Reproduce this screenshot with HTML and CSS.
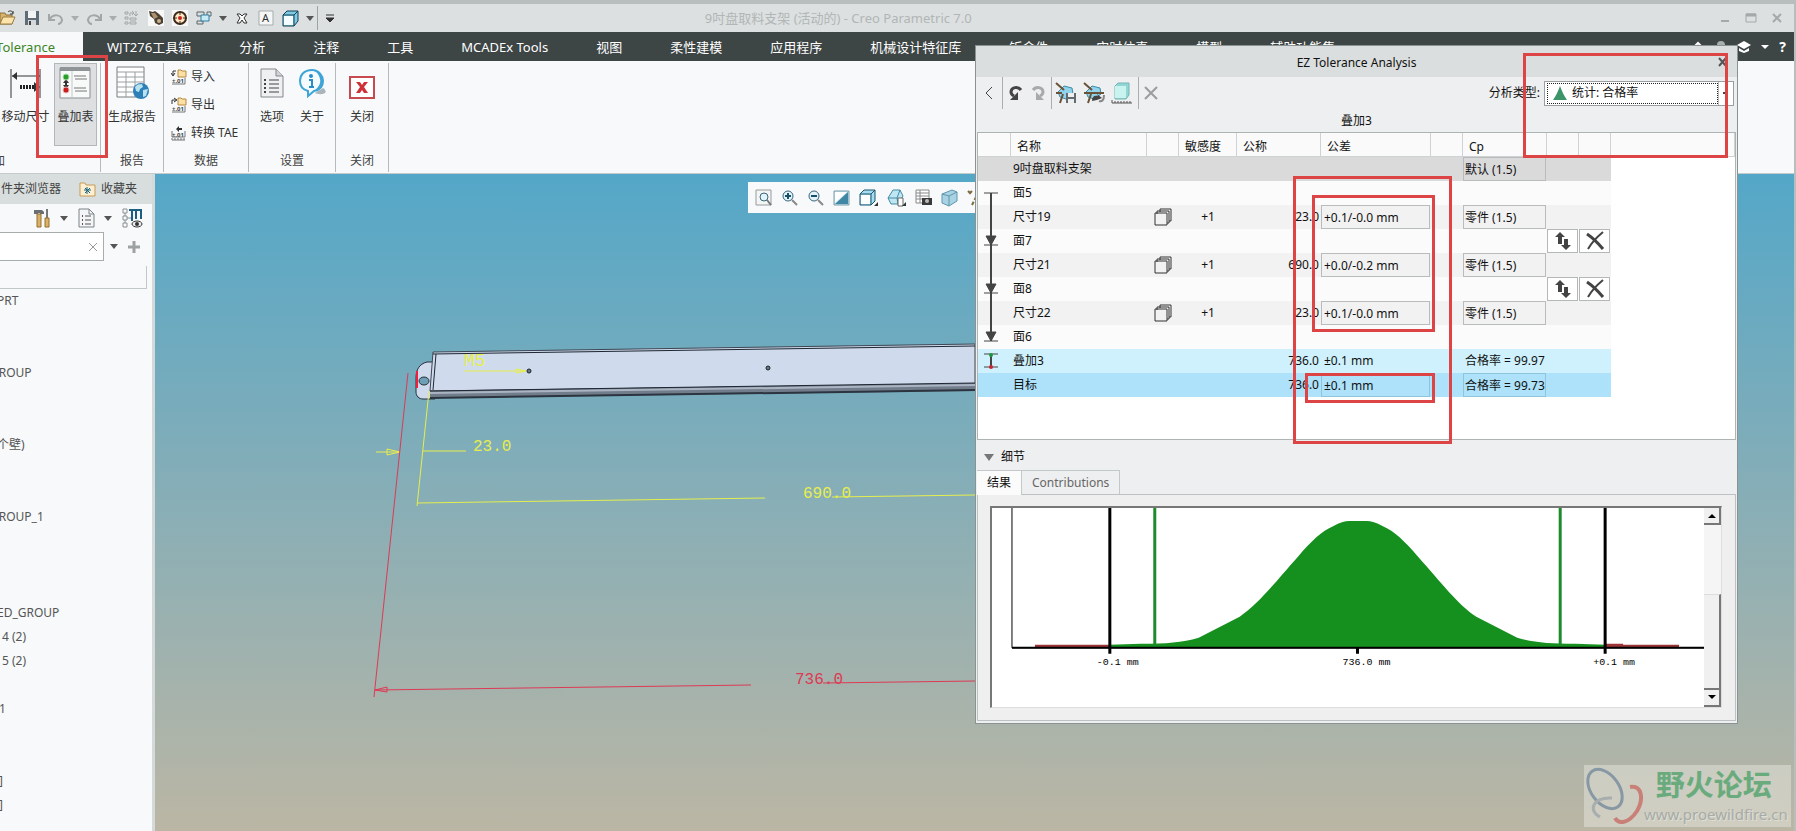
FILE: index.html
```html
<!DOCTYPE html>
<html lang="zh">

<head>
    <meta charset="UTF-8">
    <meta name="viewport" content="width=device-width, initial-scale=1.0">
    <title>9吋盘取料支架 (活动的) - Creo Parametric 7.0</title>
    <link rel="stylesheet" href="styles.css">
</head>

<body>
    <div class="app">
        <!-- 标题栏 -->
        <header class="titlebar">
            <div class="quick">
                <button class="qbtn" aria-label="打开"><svg width="16" height="16"><path d="M0 3h5l1 2h6v9H0z" fill="#d9b36a" stroke="#8a6f3c"/><path d="M0 14l3-7h12l-3 7z" fill="#fbe3ab" stroke="#9a7b41"/><path d="M8 2c2-2 4-1 5 1m0-2v3h-3" fill="none" stroke="#333"/></svg></button>
                <button class="qbtn" aria-label="保存"><svg width="16" height="16"><path d="M1 1h14v14H1z" fill="#5f6b75"/><path d="M4 1h8v7H4z" fill="#f1f3f4"/><path d="M4 10h8v5H4z" fill="#d5d9dc"/><path d="M5 11h2v4H5z" fill="#444"/></svg></button>
                <button class="qbtn" aria-label="撤销"><svg width="16" height="16"><path d="M1 4v6h6M2 9c3-5 11-5 12 1 0 2-2 4-4 4" fill="none" stroke="#a2a6a6" stroke-width="2"/></svg></button>
                <button class="caret pale" aria-label="撤销列表"></button>
                <button class="qbtn" aria-label="重做"><svg width="16" height="16"><path d="M15 4v6H9m5-1C11 4 3 4 2 10c0 2 2 4 4 4" fill="none" stroke="#a2a6a6" stroke-width="2"/></svg></button>
                <button class="caret pale" aria-label="重做列表"></button>
                <button class="qbtn" aria-label="重新生成"><svg width="16" height="16"><path d="M1 2h3v2H1zm0 5h3v2H1zm0 5h3v2H1zM6 8h6v2H6zm0 4h6v2H6zM6 6V3h3m-1-2l2 2-2 2m4-4v5m-2-2l2 2 2-2" fill="none" stroke="#a3a7a7"/></svg></button>
                <button class="qbtn tile" aria-label="外观"><svg width="16" height="16"><path d="M1 1l4 1 2-1 4 3 4 4v5l-4 2-4-2-1-4-4-3z" fill="#4d4134"/><path d="M3 3l4 0 3 4-4 2z" fill="#a9926e"/><circle cx="11" cy="11" r="2" fill="#c5b391"/></svg></button>
                <button class="qbtn tile" aria-label="定位"><svg width="16" height="16"><circle cx="8" cy="8" r="6" fill="#ffe9c4" stroke="#3d2a1a" stroke-width="2"/><path d="M8 1v14M1 8h14" stroke="#3d2a1a" stroke-dasharray="4 6"/><circle cx="8" cy="8" r="2" fill="#c22"/></svg></button>
                <button class="qbtn" aria-label="窗口"><svg width="16" height="16"><path d="M1 2h7v4H1zM1 11h6v3H1zM11 2h4v4h-4z" fill="none" stroke="#5d666b"/><path d="M5 5h8v6H5z" fill="#c6eaf6" stroke="#2f7da0"/></svg></button>
                <button class="caret" aria-label="窗口列表"></button>
                <button class="qbtn" aria-label="关闭窗口"><svg width="16" height="16"><path d="M3 4h3l2 2 2-2h3l-3 4 3 5h-3l-2-3-2 3H3l3-5z" fill="#fff" stroke="#333"/></svg></button>
                <button class="qbtn" aria-label="注释"><svg width="16" height="16"><path d="M1 1h14v14H1z" fill="#f5f7f7" stroke="#a6abab"/><text x="4" y="12" class="icon-text">A</text></svg></button>
                <button class="qbtn" aria-label="显示样式"><svg width="17" height="17"><path d="M1 5l4-4h11v10l-4 5H1z" fill="#7fcbe6" stroke="#123f52"/><path d="M2 6h9v9H2z" fill="#f4fcff"/><path d="M1 5h11v11M12 5l4-4" fill="none" stroke="#123f52"/></svg></button>
                <button class="caret" aria-label="显示样式列表"></button>
                <span class="qsep"></span>
                <button class="qbtn" aria-label="自定义"><svg width="16" height="16"><path d="M4 5h8M4 8h8l-4 4z" fill="#333" stroke="#333"/></svg></button>
            </div>
            <h1 class="app-title">9吋盘取料支架 (活动的) - Creo Parametric 7.0</h1>
            <div class="win-ctl">
                <button aria-label="最小化"><svg width="12" height="12"><path d="M2 9h8" stroke="#a5a9a9" stroke-width="2"/></svg></button>
                <button aria-label="最大化"><svg width="12" height="12"><path d="M1 2h10v8H1z" fill="none" stroke="#a5a9a9"/><path d="M1 3h10" stroke="#a5a9a9" stroke-width="3"/></svg></button>
                <button aria-label="退出"><svg width="12" height="12"><path d="M2 2l8 8m0-8l-8 8" stroke="#a5a9a9" stroke-width="2"/></svg></button>
            </div>
        </header>

        <nav class="tabs">
            <a href="#" class="tab active">Tolerance</a>
            <a href="#" class="tab">WJT276工具箱</a>
            <a href="#" class="tab">分析</a>
            <a href="#" class="tab">注释</a>
            <a href="#" class="tab">工具</a>
            <a href="#" class="tab">MCADEx Tools</a>
            <a href="#" class="tab">视图</a>
            <a href="#" class="tab">柔性建模</a>
            <a href="#" class="tab">应用程序</a>
            <a href="#" class="tab">机械设计特征库</a>
            <a href="#" class="tab">钣金件</a>
            <a href="#" class="tab">实时仿真</a>
            <a href="#" class="tab">模型</a>
            <a href="#" class="tab">辅助功能集</a>
            <div class="tab-tools">
                <button aria-label="折叠功能区"><svg width="14" height="14"><path d="M2 8l5-5 5 5" fill="none" stroke="#fff" stroke-width="2"/></svg></button>
                <button aria-label="通知"><svg width="14" height="14"><circle cx="7" cy="5" r="4" fill="#a9afaf"/></svg></button>
                <button aria-label="学习"><svg width="14" height="14"><path d="M0 5l7-4 7 4-7 4z" fill="#fff"/><path d="M2 8v3l5 2 5-2V8l-5 3z" fill="#fff"/></svg></button>
                <button aria-label="学习列表"><svg width="10" height="14"><path d="M1 5h8l-4 4z" fill="#fff"/></svg></button>
                <button class="help" aria-label="帮助">?</button>
            </div>
        </nav>

        <!-- 功能区 -->
        <section class="ribbon">
            <div class="group g-stack">
                <div class="group-body">
                    <button class="big"><svg width="32" height="34"><path d="M2 3v29M31 3v29M3 10h28" stroke="#333" fill="none"/><path d="M3 10l5-4v8z" fill="#333"/><path d="M11 21h16" stroke="#222" stroke-width="4" stroke-dasharray="2 1"/><path d="M25 16l6 5-6 5z" fill="#333"/></svg><span>移动尺寸</span></button>
                    <button class="big pressed"><svg width="32" height="34"><path d="M1 2h30v30H1z" fill="#f8f9f9" stroke="#8a8f91"/><path d="M1 1h30v4H1z" fill="#8f9496"/><path d="M13 5v27" stroke="#c4c8c9"/><path d="M7 12v12" stroke="#333" stroke-width="2"/><path d="M4 17l3-4 3 4zm0 2l3 4 3-4z" fill="#333"/><circle cx="7" cy="11" r="3" fill="#2aa02a" stroke="#a7dba7"/><circle cx="7" cy="24" r="3" fill="#c91e1e" stroke="#eab0b0"/><path d="M15 10h12M16 13h12M15 22h12M16 25h12" stroke="#777"/></svg><span>叠加表</span><i class="mark mark-ribbon"></i></button>
                </div>
                <div class="group-name clipped">加</div>
            </div>
            <div class="group g-report">
                <div class="group-body">
                    <button class="big"><svg width="34" height="34"><path d="M2 1h27v30H2z" fill="#fff" stroke="#777d80"/><path d="M2 6h27M2 11h27M2 16h27M2 21h27M2 26h27M11 6v25M20 6v25" stroke="#9a9fa2"/><circle cx="26" cy="25" r="8" fill="#2d7fb8"/><path d="M20 21c3-4 6-2 7-3l1 3-3 2-1 3-3-1zm8 3l5-1-2 7-3 1z" fill="#b9e2ef"/></svg><span>生成报告</span></button>
                </div>
                <div class="group-name">报告</div>
            </div>
            <div class="group g-data">
                <div class="group-body rows">
                    <button class="small"><svg width="16" height="16"><path d="M7 1h3l1 1h4v6H7z" fill="#fbe0a6" stroke="#b58a3f"/><path d="M5 2H2v4m-2-2l2 3 2-3" fill="none" stroke="#333"/><path d="M1 15h13V9" fill="none" stroke="#777"/><text x="1" y="14" class="tiny-text">±.01</text></svg><span>导入</span></button>
                    <button class="small"><svg width="16" height="16"><path d="M7 1h3l1 1h4v6H7z" fill="#fbe0a6" stroke="#b58a3f"/><path d="M1 7V3h4M3 1l3 2-3 2" fill="none" stroke="#333"/><path d="M1 15h13V9" fill="none" stroke="#777"/><text x="1" y="14" class="tiny-text">±.01</text></svg><span>导出</span></button>
                    <button class="small"><svg width="16" height="16"><path d="M5 4l3-3v2h3v2H8v2z" fill="#333"/><text x="1" y="12" class="tiny-text">±.01</text><path d="M1 6v6h13V6M1 13v2M4 13v2M7 13v2M10 13v2M13 13v2M1 15h13" fill="none" stroke="#777"/></svg><span>转换 TAE</span></button>
                </div>
                <div class="group-name">数据</div>
            </div>
            <div class="group g-set">
                <div class="group-body">
                    <button class="big mid"><svg width="26" height="34"><path d="M2 3h15l7 7v21H2z" fill="#eef0f1" stroke="#84898c"/><path d="M17 3v7h7" fill="#cfd3d5" stroke="#84898c"/><path d="M10 14h10M10 18h10M10 22h10M10 26h10" stroke="#444"/><path d="M5 14h2M5 18h2M5 22h2M5 26h2" stroke="#444" stroke-width="2"/></svg><span>选项</span></button>
                    <button class="big mid"><svg width="28" height="34"><path d="M25 22c3 2 3 4 2 5-3 2-8 1-10 0" fill="#aab4b9"/><path d="M14 4C6 4 2 9 2 15s4 9 8 10v5l6-5c6-1 9-5 9-10S21 4 14 4z" fill="#f6fbfe" stroke="#3ea5d6" stroke-width="2"/><path d="M14 4c7 0 11 5 11 11s-4 9-9 10c5-4 7-8 6-12-1-5-4-8-8-9z" fill="#3ea5d6"/><circle cx="13" cy="10" r="2" fill="#2a8ec4"/><path d="M11 14h3v7m-3 0h5" stroke="#2a8ec4" stroke-width="2" fill="none"/></svg><span>关于</span></button>
                </div>
                <div class="group-name">设置</div>
            </div>
            <div class="group g-close">
                <div class="group-body">
                    <button class="big mid"><svg width="28" height="34"><path d="M2 11h24v21H2z" fill="#fff" stroke="#c74a50" stroke-width="2"/><path d="M8 16h4l2 3 2-3h4l-4 5 4 6h-4l-2-3-2 3H8l4-6z" fill="#cf3139"/></svg><span>关闭</span></button>
                </div>
                <div class="group-name">关闭</div>
            </div>
        </section>

        <main class="work">
            <!-- 模型树 -->
            <aside class="side">
                <div class="side-tabs">
                    <button class="side-tab cut">件夹浏览器</button>
                    <button class="side-tab"><svg width="17" height="16"><path d="M1 2h5l1 2h9v11H1z" fill="#fdf0d2" stroke="#c79a55"/><path d="M8 6v7M5 9h7M6 7l5 5m0-5l-5 5" stroke="#17657f"/></svg>收藏夹</button>
                </div>
                <div class="side-tools">
                    <button aria-label="设置"><svg width="18" height="20"><path d="M1 2h8l2 2v2H7V5H5v1H1z" fill="#6b6f74"/><path d="M4 6h4v13H4z" fill="#dbb067" stroke="#94702f"/><path d="M14 1v9" stroke="#777" stroke-width="2"/><path d="M12 10h4v9h-4z" fill="#dbb067" stroke="#94702f"/></svg></button>
                    <button class="caret" aria-label="设置列表"></button>
                    <button aria-label="显示"><svg width="17" height="20"><path d="M1 1h10l5 5v13H1z" fill="#f3f5f6" stroke="#7d8386"/><path d="M11 1v5h5" fill="none" stroke="#7d8386"/><path d="M7 8h6M7 12h6M7 16h6" stroke="#555"/><path d="M4 8h1M4 12h1M4 16h1" stroke="#555" stroke-width="2"/></svg></button>
                    <button class="caret" aria-label="显示列表"></button>
                    <button aria-label="树列"><svg width="21" height="20"><path d="M1 1h4v4H1zM1 8h4v4H1zM1 15h4v4H1zM5 10h5M3 5v3M3 12v3" fill="none" stroke="#8b9092"/><path d="M7 2h3v11M11 2h3v9M15 2h4v9" fill="none" stroke="#1d5f80" stroke-width="2"/><ellipse cx="15" cy="16" rx="5" ry="3" fill="#e9edef" stroke="#333"/><circle cx="15" cy="16" r="2" fill="#333"/></svg></button>
                </div>
                <div class="side-search">
                    <div class="search-box">
                        <input type="text" aria-label="搜索模型树">
                        <button class="clear" aria-label="清除"><svg width="10" height="10"><path d="M1 1l8 8m0-8L1 9" stroke="#999"/></svg></button>
                    </div>
                    <button class="caret" aria-label="搜索列表"></button>
                    <button aria-label="添加"><svg width="12" height="12"><path d="M6 0v12M0 6h12" stroke="#9da1a2" stroke-width="3"/></svg></button>
                </div>
                <div class="filter-row"></div>
                <ul class="tree">
                    <li class="in">PRT</li>
                    <li></li>
                    <li></li>
                    <li>GROUP</li>
                    <li></li>
                    <li></li>
                    <li class="in">个壁)</li>
                    <li></li>
                    <li></li>
                    <li>GROUP_1</li>
                    <li></li>
                    <li></li>
                    <li></li>
                    <li class="in">ED_GROUP</li>
                    <li class="leaf">4 (2)</li>
                    <li class="leaf">5 (2)</li>
                    <li></li>
                    <li class="edge">1</li>
                    <li></li>
                    <li></li>
                    <li class="edge">]</li>
                    <li class="edge">]</li>
                </ul>
            </aside>

            <!-- 图形区 -->
            <section class="view">
                <svg class="model" width="820" height="640" viewBox="155 174 820 640">
                    <path d="M433 362h-6c-8 2-11 8-11 16v14c0 4 3 7 7 7h12z" fill="#cfdaec" stroke="#26303c"/>
                    <path d="M417 371v17" stroke="#f0203c" stroke-width="2"/>
                    <ellipse cx="424" cy="381" rx="5" ry="4" fill="#6f9fb4" stroke="#26303c"/>
                    <path d="M433 352L975 344V384L430 391z" fill="#cfdaec" stroke="#3c4653"/>
                    <path d="M433 354L975 346" stroke="#1e2732"/>
                    <path d="M436 354L433 390" stroke="#1e2732"/>
                    <path d="M430 391L975 383V391L430 398z" fill="#727d8c"/>
                    <path d="M430 393L975 385" stroke="#aab4c2" stroke-width="2"/>
                    <path d="M430 398L975 390" stroke="#2b343f" stroke-width="2"/>
                    <path d="M430 391L975 383" stroke="#1e2732"/>
                    <circle cx="529" cy="371" r="2" fill="#5d7d8c" stroke="#222"/>
                    <circle cx="768" cy="368" r="2" fill="#5d7d8c" stroke="#222"/>
                    <g class="dim-yellow">
                        <path d="M464 371h62M516 369l10 2-10 2zM429 391L417 506M417 503L765 498M423 451h43M376 452h24M387 449l13 3-13 3zM832 497L975 495"/>
                        <text x="464" y="366" class="note">M5</text>
                        <text x="473" y="451">23.0</text>
                        <text x="803" y="498">690.0</text>
                    </g>
                    <g class="dim-red">
                        <path d="M408 373L374 697M375 690L751 685M375 690l12-3v5zM823 683L975 681"/>
                        <text x="795" y="684">736.0</text>
                    </g>
                </svg>
                <div class="view-bar">
                    <button aria-label="重新调整"><svg width="18" height="18"><path d="M1 1h15v15H1z" fill="#f4f6f6" stroke="#999"/><circle cx="9" cy="8" r="4" fill="#e3f4fa" stroke="#37657a"/><path d="M12 11l4 5" stroke="#777" stroke-width="2"/></svg></button>
                    <button aria-label="放大"><svg width="18" height="18"><circle cx="7" cy="7" r="5" fill="#e3f4fa" stroke="#37657a"/><path d="M4 7h6M7 4v6" stroke="#17506b" stroke-width="2"/><path d="M11 11l5 5" stroke="#888" stroke-width="2"/></svg></button>
                    <button aria-label="缩小"><svg width="18" height="18"><circle cx="7" cy="7" r="5" fill="#e3f4fa" stroke="#37657a"/><path d="M4 7h6" stroke="#17506b" stroke-width="2"/><path d="M11 11l5 5" stroke="#888" stroke-width="2"/></svg></button>
                    <button aria-label="重画"><svg width="18" height="18"><path d="M1 2h15v14H1z" fill="#c3e2ee" stroke="#7d9dab"/><path d="M2 15L15 3v12z" fill="#3f87a5"/><path d="M2 3h12L2 14z" fill="#fff"/></svg></button>
                    <button aria-label="显示样式"><svg width="20" height="18"><path d="M1 5l4-4h11v11l-4 4H1z" fill="#a5dcee" stroke="#1a5570"/><path d="M2 6h9v9H2z" fill="#fff"/><path d="M1 5h11v11M12 5l4-4" fill="none" stroke="#1a5570"/><path d="M19 13v4h-4z" fill="#333"/></svg></button>
                    <button aria-label="已命名视图"><svg width="20" height="18"><path d="M1 9l5-8h7l3 6-5 8H4z" fill="#bfe6f3" stroke="#4289a5"/><path d="M1 9h9l3-8M10 9l1 6" fill="none" stroke="#4289a5"/><path d="M11 9h5v8h-5z" fill="#fff" stroke="#666"/><path d="M19 13v4h-4z" fill="#333"/></svg></button>
                    <button aria-label="视图管理器"><svg width="18" height="18"><path d="M1 1h13v13H1zM1 4h13M1 7h13M1 10h13M5 1v13" fill="#fff" stroke="#888"/><path d="M7 9h10v7H7z" fill="#3a3a3a"/><circle cx="12" cy="12" r="2" fill="#bbb"/></svg></button>
                    <button aria-label="透视图"><svg width="18" height="18"><path d="M1 5l10-4 5 2v9l-8 5-7-3z" fill="#a9d3e2" stroke="#5d97ad"/><path d="M1 5l7 2v10M8 7l8-4" fill="none" stroke="#5d97ad"/></svg></button>
                    <button aria-label="基准显示"><svg width="18" height="18"><path d="M1 2l4 4m0-4L1 6M12 2L5 16M15 5l-3 8" stroke="#7d6a3c" stroke-width="2" stroke-dasharray="4 2"/></svg></button>
                </div>
                <div class="watermark">
                    <svg width="60" height="60"><ellipse cx="21" cy="24" rx="14" ry="22" fill="none" stroke="#8797a4" stroke-width="3" transform="rotate(-36 21 24)"/><path d="M28 33C8 32 4 46 16 52" fill="none" stroke="#a8adad" stroke-width="3"/><path d="M46 22c12-2 14 12 7 24-8 12-18 14-22 7" fill="none" stroke="#c98079" stroke-width="4"/></svg>
                    <div class="wm-text"><b>野火论坛</b><span>www.proewildfire.cn</span></div>
                </div>
            </section>
        </main>

        <!-- 公差分析对话框 -->
        <section class="dialog" role="dialog" aria-labelledby="dlg-title">
            <div class="dlg-head">
                <h2 id="dlg-title">EZ Tolerance Analysis</h2>
                <button class="dlg-close" aria-label="关闭对话框"><svg width="10" height="10"><path d="M1 1l7 8m0-8L1 9" stroke="#555" stroke-width="2"/></svg></button>
            </div>
            <div class="dlg-tools">
                <div class="tool-set back"><button aria-label="返回"><svg width="10" height="16"><path d="M8 2L2 8l6 6" fill="none" stroke="#444"/></svg></button></div>
                <div class="tool-set"><button aria-label="撤销"><svg width="16" height="16"><path d="M14 5C11 1 4 2 4 7c0 2 1 3 3 4" fill="none" stroke="#444" stroke-width="3"/><path d="M11 7v8H3z" fill="#444"/></svg></button>
                    <button aria-label="重做"><svg width="16" height="16"><path d="M2 5c3-4 10-3 10 2 0 2-1 3-3 4" fill="none" stroke="#a7aaab" stroke-width="3"/><path d="M5 7v8h8z" fill="#a7aaab"/></svg></button></div>
                <div class="tool-set wide"><button aria-label="保存视图"><svg width="22" height="22"><path d="M3 10l6-6 8 2 1 6-7 5-6-2z" fill="#8fd3ec" stroke="#3d8aa8"/><path d="M1 1l8 7M1 11h6M8 12L5 21" stroke="#6a5238" stroke-width="2"/><path d="M11 11h10v10H11z" fill="#636b72"/><path d="M13 11h6v4h-6zM13 17h6v4h-6z" fill="#eee"/></svg></button>
                    <button aria-label="恢复视图"><svg width="22" height="22"><path d="M3 10l6-6 8 2 1 6-7 5-6-2z" fill="#8fd3ec" stroke="#3d8aa8"/><path d="M1 1l8 7M1 11h20M8 12L5 21" stroke="#6a5238" stroke-width="2"/><path d="M9 19c0-4 2-6 6-5l-1-2 5 4-5 2z" fill="#444"/><path d="M21 13c0 5-2 7-5 6" fill="none" stroke="#888" stroke-width="2"/></svg></button>
                    <button aria-label="尺寸"><svg width="22" height="22"><path d="M4 4l3-3h11v12l-3 4H4z" fill="#8fd6d4" stroke="#76b5b5"/><path d="M4 4h11v12H4z" fill="#c9f3ef"/><path d="M1 21h20M1 18v3M4 19v2M7 19v2M10 19v2M13 19v2M16 19v2M19 19v2" stroke="#555"/></svg></button></div>
                <div class="tool-set end"><button aria-label="删除"><svg width="16" height="16"><path d="M2 2l12 12m0-12L2 14" stroke="#9a9d9e" stroke-width="2"/></svg></button></div>
                <label class="type-label" for="type">分析类型:</label>
                <div class="type-box">
                    <svg width="16" height="16"><path d="M8 1c2 5 4 10 7 14H1C4 11 6 6 8 1z" fill="#3d9468"/></svg>
                    <select id="type">
                        <option>统计: 合格率</option>
                    </select>
                    <i class="arrow"></i>
                </div>
            </div>
            <div class="dlg-caption">叠加3</div>

            <div class="grid-box">
                <table class="grid">
                    <colgroup>
                        <col class="c-line"><col class="c-name"><col class="c-icon"><col class="c-sens"><col class="c-nom"><col class="c-tol"><col class="c-icon"><col class="c-cp"><col class="c-icon"><col class="c-icon"><col>
                    </colgroup>
                    <thead>
                        <tr><th></th><th>名称</th><th></th><th>敏感度</th><th>公称</th><th>公差</th><th></th><th>Cp</th><th></th><th></th><th></th></tr>
                    </thead>
                    <tbody>
                        <tr class="part"><td></td><td>9吋盘取料支架</td><td></td><td></td><td></td><td></td><td></td><td><input type="text" value="默认 (1.5)" aria-label="默认 Cp"></td><td></td><td></td><td class="rest"></td></tr>
                        <tr><td><svg class="link"><path d="M6 12h14"/><path d="M13 12v12" class="shaft"/></svg></td><td>面5</td><td></td><td></td><td></td><td></td><td></td><td></td><td></td><td></td><td class="rest"></td></tr>
                        <tr class="dim"><td><svg class="link"><path d="M13 0v24" class="shaft"/></svg></td><td>尺寸19</td><td><svg class="sheets" width="18" height="18"><path d="M6 4V1h11v12h-2M3 6V3h12v12h-2"/><path d="M1 5h12v12H1z"/></svg></td><td>+1</td><td>23.0</td><td><input type="text" value="+0.1/-0.0 mm" aria-label="尺寸19 公差"></td><td></td><td><input type="text" value="零件 (1.5)" aria-label="尺寸19 Cp"></td><td></td><td></td><td class="rest"></td></tr>
                        <tr><td><svg class="link"><path d="M13 0v24" class="shaft"/><path d="M6 16h14M8 7h10l-5 9z"/></svg></td><td>面7</td><td></td><td></td><td></td><td></td><td></td><td></td><td><button aria-label="面7 反向"><svg width="18" height="18"><path d="M6 0l5 5H8v7H4V5H1zM12 18l-5-5h3V7h4v6h3z" fill="#444"/></svg></button></td><td><button aria-label="面7 删除"><svg width="20" height="20"><path d="M2 3c6 4 11 9 16 15" fill="none" stroke="#444" stroke-width="3"/><path d="M18 1C12 6 7 11 3 18" fill="none" stroke="#444" stroke-width="2"/></svg></button></td><td class="rest"></td></tr>
                        <tr class="dim"><td><svg class="link"><path d="M13 0v24" class="shaft"/></svg></td><td>尺寸21</td><td><svg class="sheets" width="18" height="18"><path d="M6 4V1h11v12h-2M3 6V3h12v12h-2"/><path d="M1 5h12v12H1z"/></svg></td><td>+1</td><td>690.0</td><td><input type="text" value="+0.0/-0.2 mm" aria-label="尺寸21 公差"></td><td></td><td><input type="text" value="零件 (1.5)" aria-label="尺寸21 Cp"></td><td></td><td></td><td class="rest"></td></tr>
                        <tr><td><svg class="link"><path d="M13 0v24" class="shaft"/><path d="M6 16h14M8 7h10l-5 9z"/></svg></td><td>面8</td><td></td><td></td><td></td><td></td><td></td><td></td><td><button aria-label="面8 反向"><svg width="18" height="18"><path d="M6 0l5 5H8v7H4V5H1zM12 18l-5-5h3V7h4v6h3z" fill="#444"/></svg></button></td><td><button aria-label="面8 删除"><svg width="20" height="20"><path d="M2 3c6 4 11 9 16 15" fill="none" stroke="#444" stroke-width="3"/><path d="M18 1C12 6 7 11 3 18" fill="none" stroke="#444" stroke-width="2"/></svg></button></td><td class="rest"></td></tr>
                        <tr class="dim"><td><svg class="link"><path d="M13 0v24" class="shaft"/></svg></td><td>尺寸22</td><td><svg class="sheets" width="18" height="18"><path d="M6 4V1h11v12h-2M3 6V3h12v12h-2"/><path d="M1 5h12v12H1z"/></svg></td><td>+1</td><td>23.0</td><td><input type="text" value="+0.1/-0.0 mm" aria-label="尺寸22 公差"></td><td></td><td><input type="text" value="零件 (1.5)" aria-label="尺寸22 Cp"></td><td></td><td></td><td class="rest"></td></tr>
                        <tr><td><svg class="link"><path d="M13 0v16" class="shaft"/><path d="M6 16h14M8 7h10l-5 9z"/></svg></td><td>面6</td><td></td><td></td><td></td><td></td><td></td><td></td><td></td><td></td><td class="rest"></td></tr>
                        <tr class="stack"><td><svg class="link"><path d="M13 6v12" class="shaft"/><path d="M6 5h14M6 18h14"/><circle cx="13" cy="6" r="2" class="dot-g"/><circle cx="13" cy="18" r="2" class="dot-r"/></svg></td><td>叠加3</td><td></td><td></td><td>736.0</td><td class="plain">±0.1 mm</td><td></td><td class="value">合格率 = 99.97</td><td></td><td></td><td class="rest"></td></tr>
                        <tr class="goal"><td></td><td>目标</td><td></td><td></td><td>736.0</td><td><input type="text" value="±0.1 mm" aria-label="目标公差"></td><td></td><td><input type="text" value="合格率 = 99.73" aria-label="目标合格率"></td><td></td><td></td><td class="rest"></td></tr>
                    </tbody>
                </table>
            </div>

            <div class="details">
                <button class="fold"><i></i>细节</button>
            </div>
            <div class="res-tabs">
                <button class="res-tab on">结果</button>
                <button class="res-tab">Contributions</button>
            </div>
            <div class="res-body">
                <div class="chart">
                    <svg class="plot" viewBox="0 0 713 199">
                        <path d="M43 137h75v3H43zM614 136h18v1h56v3h-74z" fill="#9c3438"/>
                        <path d="M118 140v-3l31-1C175 136 190 135 207 130L248 109C268 95 282 76 307 48C319 34 330 23 342 18Q351 13 358 13H375Q382 13 391 18C403 23 414 34 426 48C451 76 465 95 485 109L526 130C543 135 558 136 584 136L614 137V140z" fill="#15901f"/>
                        <path d="M163 0v138M569 0v138" stroke="#1d8a2b" stroke-width="3"/>
                        <path d="M20 0v140H713" fill="none" stroke="#000"/>
                        <path d="M20 140H713" stroke="#000" stroke-width="2"/>
                        <path d="M118 0v146M614 0v146M366 140v6" stroke="#000" stroke-width="3"/>
                        <g class="plot-text">
                            <text x="105" y="157">-0.1 mm</text>
                            <text x="351" y="157">736.0 mm</text>
                            <text x="602" y="157">+0.1 mm</text>
                        </g>
                    </svg>
                    <div class="scroll">
                        <button aria-label="向上滚动"><i class="up"></i></button>
                        <div class="thumb"></div>
                        <button aria-label="向下滚动"><i class="down"></i></button>
                    </div>
                </div>
            </div>

            <i class="mark mark-type"></i>
            <i class="mark mark-column"></i>
            <i class="mark mark-tol"></i>
            <i class="mark mark-goal"></i>
        </section>
    </div>
</body>

</html>
```
FILE: styles.css
```css
* {
    margin: 0;
    padding: 0;
    box-sizing: border-box;
}

body {
    font-family: "Noto Sans", "Noto Sans CJK SC", sans-serif;
    font-size: 12px;
    line-height: 18px;
    color: #222;
}

button,
input,
select {
    font: inherit;
    color: inherit;
    border: none;
    background: none;
}

button svg {
    display: block;
}

.app {
    position: relative;
    height: 100vh;
    display: flex;
    flex-direction: column;
    overflow: hidden;
    background: #f7f9fa;
    border-top: 4px solid #b8bdbd;
    border-right: 2px solid #b8bdbd;
}

/* 标题栏 */
.titlebar {
    display: grid;
    grid-template-columns: 6fr auto 7fr;
    align-items: center;
    height: 28px;
    background: #dce0e0;
}

.quick {
    display: flex;
    align-items: center;
    gap: 8px;
}

.caret {
    flex: none;
    width: 8px;
    border: 4px solid transparent;
    border-top: 5px solid #555;
    border-bottom: none;
}

.caret.pale {
    border-top-color: #a9adad;
}

.quick .caret {
    margin: 0 -1px;
}

.tile {
    background: #f8f8f8;
}

.qsep {
    width: 1px;
    height: 24px;
    background: #9da3a3;
    margin: 0 -4px;
}

.icon-text {
    font-size: 11px;
    fill: #333;
}

.tiny-text {
    font-size: 6px;
    font-weight: bold;
    fill: #444;
}

.app-title {
    font-size: 13px;
    font-weight: normal;
    color: #b1b6b6;
    white-space: nowrap;
}

.win-ctl {
    display: flex;
    justify-content: flex-end;
    gap: 14px;
    padding-right: 11px;
}

/* 选项卡 */
.tabs {
    display: flex;
    height: 29px;
    background: #3d4545;
}

.tab {
    padding: 0 24px;
    font-size: 13px;
    line-height: 30px;
    color: #fff;
    text-decoration: none;
    white-space: nowrap;
}

.tab.active {
    display: flex;
    justify-content: flex-end;
    width: 83px;
    padding: 0 28px 0 0;
    background: #f7f9fa;
    color: #3d8526;
}

.tab-tools {
    display: flex;
    align-items: center;
    gap: 9px;
    margin-left: auto;
    padding-right: 8px;
    color: #fff;
}

.help {
    font-size: 14px;
    font-weight: bold;
}

/* 功能区 */
.ribbon {
    display: flex;
    height: 113px;
    padding: 2px 0 1px;
    background: #f7f9fa;
    border-bottom: 1px solid #c5cbcb;
}

.group {
    display: flex;
    flex-direction: column;
    border-right: 1px solid #b5baba;
}

.g-stack {
    width: 101px;
}

.g-report {
    width: 63px;
}

.g-data {
    width: 85px;
}

.g-set {
    width: 87px;
}

.g-close {
    width: 53px;
}

.group-body {
    display: flex;
    flex: 1;
    justify-content: center;
}

.g-stack .group-body {
    justify-content: flex-end;
    gap: 3px;
    padding-right: 3px;
}

.group-name {
    height: 20px;
    text-align: center;
    color: #444;
}

.group-name.clipped {
    display: flex;
    justify-content: flex-end;
    width: 5px;
}

.big {
    position: relative;
    display: flex;
    flex-direction: column;
    align-items: center;
    gap: 8px;
    width: 52px;
    height: 83px;
    padding-top: 3px;
    color: #333;
    white-space: nowrap;
}

.big.pressed {
    width: 44px;
    padding-top: 2px;
    background: #dddfe1;
    border: 1px solid #b3b7b9;
}

.big.mid {
    width: 40px;
}

.group-body.rows {
    flex-direction: column;
    justify-content: flex-start;
    padding-left: 7px;
}

.small {
    display: flex;
    align-items: center;
    gap: 4px;
    height: 28px;
    color: #333;
}

/* 模型树 */
.work {
    display: flex;
    flex: 1;
    min-height: 0;
}

.side {
    width: 155px;
    overflow: hidden;
    border-right: 3px solid #d3dad9;
    color: #555;
}

.side-tabs {
    display: flex;
    gap: 18px;
    height: 30px;
    background: #d8dedd;
}

.side-tab {
    display: flex;
    align-items: center;
    gap: 5px;
    color: #444;
    white-space: nowrap;
}

.side-tab.cut {
    justify-content: flex-end;
    width: 61px;
}

.side-tools {
    display: flex;
    align-items: center;
    justify-content: flex-end;
    gap: 9px;
    height: 28px;
    padding-right: 9px;
}

.side-tools .caret {
    margin-right: 1px;
}

.side-search {
    display: flex;
    align-items: center;
    gap: 6px;
}

.side-search .caret {
    margin-right: 4px;
}

.search-box {
    display: flex;
    align-items: center;
    width: 104px;
    height: 29px;
    padding-right: 5px;
    background: #fff;
    border: 1px solid #a7adad;
    border-left: none;
}

.search-box input {
    flex: 1;
    min-width: 0;
}

.filter-row {
    height: 23px;
    margin: 5px 5px 0 0;
    border-right: 1px solid #c2c8c8;
    border-bottom: 1px solid #c2c8c8;
}

.tree {
    list-style: none;
    margin-left: -10px;
}

.tree li {
    height: 24px;
    line-height: 24px;
    white-space: nowrap;
}

.tree .in {
    padding-left: 7px;
}

.tree .edge {
    padding-left: 9px;
}

.tree .leaf {
    padding-left: 12px;
}

/* 图形区 */
.view {
    position: relative;
    flex: 1;
    overflow: hidden;
    background: linear-gradient(#54a7c8, #88aeb6 50%, #bbb6a4);
}

.model {
    position: absolute;
    left: 0;
    top: 0;
}

.dim-yellow path,
.dim-red path {
    fill: none;
    stroke: #e6ee4e;
}

.dim-red path {
    stroke: #dc3a55;
}

.dim-yellow text,
.dim-red text {
    font-family: "Liberation Mono", monospace;
    font-size: 16px;
    fill: #e6ee4e;
}

.dim-yellow .note {
    font-size: 18px;
}

.dim-red text {
    fill: #dc3a55;
}

.view-bar {
    position: absolute;
    left: 593px;
    top: 8px;
    display: flex;
    align-items: center;
    gap: 8px;
    height: 31px;
    padding: 0 7px;
    background: #f7f9fa;
}

.watermark {
    position: absolute;
    right: 3px;
    bottom: 4px;
    display: flex;
    width: 207px;
    height: 62px;
    background: rgba(222, 222, 212, 0.6);
}

.wm-text {
    display: flex;
    flex-direction: column;
    white-space: nowrap;
    text-align: right;
}

.wm-text b {
    padding-right: 16px;
    font-size: 29px;
    line-height: 40px;
    color: #6aab7d;
}

.wm-text span {
    font-size: 15px;
    line-height: 18px;
    color: #a7aba6;
    text-shadow: 1px 1px 0 #dedfd6;
}

/* 对话框 */
.dialog {
    position: absolute;
    right: 56px;
    top: 41px;
    width: 763px;
    padding-bottom: 2px;
    background: #eeeff0;
    border: 1px solid #8b9292;
    color: #111;
}

.dlg-head {
    position: relative;
    height: 31px;
    background: #dadede;
    text-align: center;
}

.dlg-head h2 {
    font-size: 12px;
    font-weight: normal;
    line-height: 34px;
}

.dlg-close {
    position: absolute;
    right: 9px;
    top: 11px;
}

.dlg-tools {
    display: flex;
    align-items: center;
    height: 32px;
    padding-right: 3px;
}

.tool-set {
    display: flex;
    align-items: center;
    gap: 8px;
    height: 32px;
    padding: 0 4px;
    border-right: 1px solid #a9aeae;
}

.tool-set.back {
    padding: 0 8px;
}

.tool-set.wide {
    padding: 0 5px 0 3px;
    gap: 6px;
}

.tool-set.end {
    border: none;
}

.type-label {
    margin-left: auto;
    padding-right: 4px;
}

.type-box {
    position: relative;
    display: flex;
    align-items: center;
    width: 190px;
    height: 25px;
    background: #fff;
    border: 1px solid #999fa0;
}

.type-box svg {
    position: absolute;
    left: 7px;
}

.type-box select {
    appearance: none;
    width: 171px;
    height: 21px;
    margin-left: 2px;
    padding-left: 24px;
    border: 1px dotted #222;
}

.type-box .arrow {
    margin-left: auto;
    width: 15px;
    height: 23px;
    border-left: 1px solid #b9bdbd;
    background: linear-gradient(#444, #444) 4px 10px / 5px 2px no-repeat;
}

.dlg-caption {
    height: 23px;
    line-height: 23px;
    text-align: center;
}

.grid-box {
    min-height: 308px;
    margin: 0 1px;
    background: #fff;
    border: 1px solid #aeb3b4;
}

.grid {
    width: 100%;
    table-layout: fixed;
    border-collapse: collapse;
}

.c-line {
    width: 33px;
}

.c-name {
    width: 136px;
}

.c-icon {
    width: 32px;
}

.c-sens {
    width: 58px;
}

.c-nom,
.c-cp {
    width: 84px;
}

.c-tol {
    width: 110px;
}

.grid th {
    height: 24px;
    padding: 4px 0 0 6px;
    font-weight: normal;
    text-align: left;
    background: #fafafa;
    box-shadow: inset -1px -1px 0 #cfd2d3;
}

.grid td {
    height: 24px;
    background: #fbfbfb;
    white-space: nowrap;
    overflow: hidden;
}

.grid td:nth-child(2) {
    padding-left: 2px;
}

.grid td:nth-child(4) {
    text-align: center;
}

.grid td:nth-child(5) {
    padding-right: 2px;
    text-align: right;
}

.grid .part td {
    background: #dadada;
}

.grid .dim td {
    background: #f2f2f2;
}

.grid .stack td {
    background: #cff1fd;
}

.grid .goal td {
    background: #aee2fb;
}

.grid tr .rest.rest {
    background: #fff;
}

.grid .plain {
    padding-left: 3px;
}

.grid .value {
    padding-left: 2px;
}

.grid input {
    display: block;
    width: calc(100% - 1px);
    height: 24px;
    padding: 0 2px;
    border: 1px solid #b9bcbd;
}

.grid td:nth-child(8) input {
    padding: 0 0 0 1px;
}

.grid .goal input {
    border-color: #8fc4dd;
}

.grid td button {
    display: flex;
    align-items: center;
    justify-content: center;
    width: 31px;
    height: 24px;
    background: #fff;
    border: 1px solid #b4b8b9;
}

.link {
    display: block;
    width: 26px;
    height: 24px;
    fill: #444;
    stroke: #444;
}

.link .shaft {
    stroke-width: 2;
}

.link .dot-g {
    fill: #1a9a3c;
    stroke: none;
}

.link .dot-r {
    fill: #d0222b;
    stroke: none;
}

.sheets {
    display: block;
    margin-left: 7px;
    fill: none;
    stroke: #333;
}

.details {
    display: flex;
    align-items: center;
    height: 30px;
    padding: 4px 0 0 8px;
}

.fold {
    display: flex;
    align-items: center;
    gap: 7px;
}

.fold i {
    border: 5px solid transparent;
    border-top: 7px solid #777;
    border-bottom: none;
}

.res-tabs {
    display: flex;
    margin: 0 1px;
}

.res-tab {
    height: 24px;
    padding: 0 10px;
    color: #666;
    border: 1px solid #c3c8c9;
    border-left: none;
    border-bottom: none;
}

.res-tab.on {
    height: 25px;
    margin-bottom: -1px;
    color: #111;
    background: #fbfbfb;
}

.res-body {
    margin: 0 1px;
    padding: 11px 13px 12px 12px;
    background: #efefef;
    border: 1px solid #bcc2c3;
}

.chart {
    display: flex;
    background: #fff;
    border: 2px solid #777;
    border-right: 1px solid #ddd;
    border-bottom: 1px solid #ddd;
}

.plot {
    flex: 1;
    min-width: 0;
    display: block;
}

.plot-text {
    font-family: "Liberation Mono", monospace;
    font-size: 10px;
}

.scroll {
    display: flex;
    flex-direction: column;
    width: 17px;
    background: #f5f5f5;
}

.scroll button {
    display: flex;
    align-items: center;
    justify-content: center;
    height: 17px;
    background: #f0f0f0;
    border-right: 2px solid #777;
    border-bottom: 2px solid #777;
}

.scroll .up,
.scroll .down {
    border: 4px solid transparent;
    border-bottom: 4px solid #000;
    border-top: none;
}

.scroll .down {
    border-top: 4px solid #000;
    border-bottom: none;
}

.thumb {
    height: 96px;
    margin-top: auto;
    background: #f0f0f0;
    border-top: 1px solid #ddd;
    border-right: 2px solid #777;
    border-bottom: 2px solid #777;
}

/* 红框标注 */
.mark {
    position: absolute;
    border: 3px solid #dd4446;
    pointer-events: none;
}

.mark-ribbon {
    left: -19px;
    top: -9px;
    width: 72px;
    height: 103px;
    z-index: 1;
}

.mark-type {
    left: 547px;
    top: 7px;
    width: 205px;
    height: 105px;
}

.mark-column {
    left: 317px;
    top: 130px;
    width: 159px;
    height: 268px;
}

.mark-tol {
    left: 336px;
    top: 149px;
    width: 123px;
    height: 137px;
}

.mark-goal {
    left: 329px;
    top: 327px;
    width: 130px;
    height: 30px;
}
```
